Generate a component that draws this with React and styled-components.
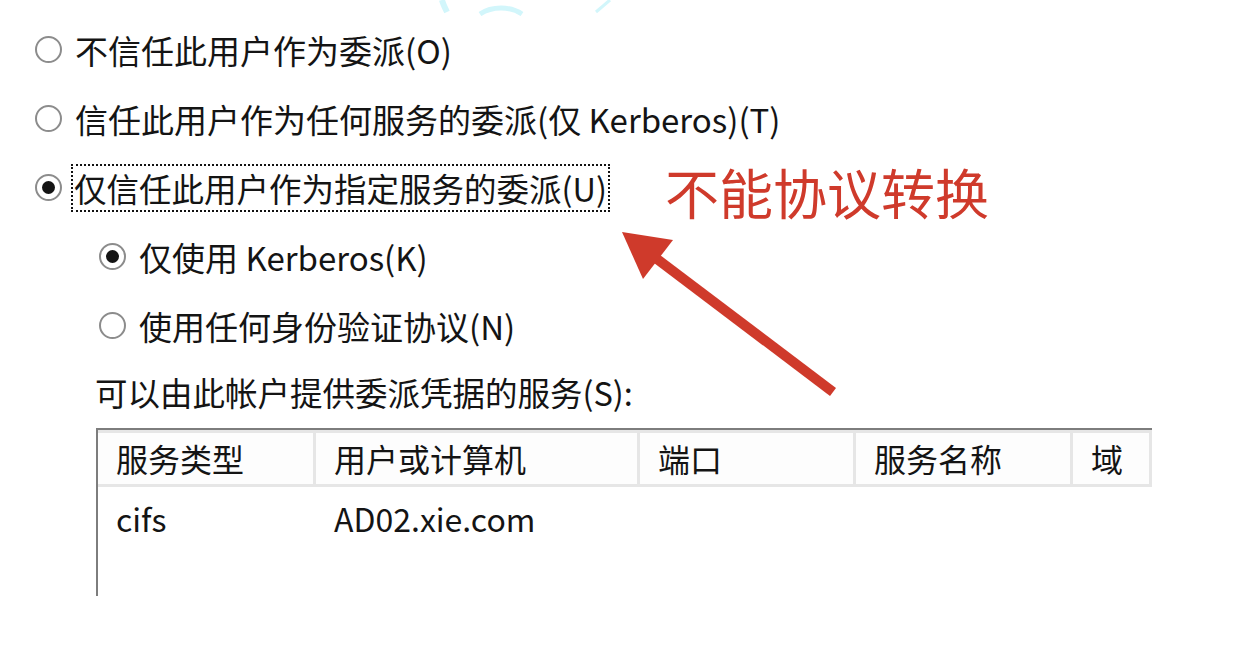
import React from 'react';
import styled, { createGlobalStyle } from 'styled-components';

const GlobalStyle = createGlobalStyle`
  html, body {
    margin: 0;
    padding: 0;
    background: #ffffff;
    overflow: hidden;
  }
  body {
    font-family: "Noto Sans CJK SC", "Noto Sans", sans-serif;
    color: #141414;
  }
`;

const Page = styled.div`
  position: relative;
  width: 1241px;
  height: 653px;
  padding: 15px 0 0 35px;
  box-sizing: border-box;
`;

const OptionRow = styled.div`
  display: flex;
  align-items: center;
  height: 69px;
  padding-left: ${p => p.$indent || 0}px;
  gap: 9px;
`;

const Radio = styled.span`
  width: 27px;
  height: 27px;
  box-sizing: border-box;
  border-radius: 50%;
  border: 2px solid #8c8c8c;
  display: inline-flex;
  align-items: center;
  justify-content: center;
  flex-shrink: 0;

  &::after {
    content: '';
    display: ${p => (p.$checked ? 'block' : 'none')};
    width: 13px;
    height: 13px;
    border-radius: 50%;
    background: #141414;
  }
`;

const Label = styled.span`
  font-size: ${p => (p.$focused ? 32.5 : 33)}px;
  line-height: 40px;
  padding: 2px ${p => (p.$focused ? 1 : 2)}px;
  border: 2px dotted ${p => (p.$focused ? '#111' : 'transparent')};
  white-space: nowrap;
`;

const Caption = styled.div`
  font-size: 32.5px;
  line-height: 40px;
  height: 64px;
  display: flex;
  align-items: center;
  padding-left: 60px;
  margin-bottom: 4px;
`;

const Table = styled.div`
  margin-left: 61px;
  width: 1056px;
  height: 168px;
  border-top: 2px solid #7d7d7d;
  border-left: 2px solid #7d7d7d;
  box-sizing: border-box;
  overflow: hidden;
`;

const Grid = styled.div`
  display: grid;
  grid-template-columns: 218px 324px 216px 217px 1fr;
`;

const HeadCell = styled.div`
  height: 57px;
  box-sizing: border-box;
  border-top: 3px solid #e6e6e6;
  border-bottom: 3px solid #e6e6e6;
  border-right: 3px solid #e6e6e6;
  background: #fdfdfd;
  font-size: 32px;
  line-height: 51px;
  padding-left: 18px;
  white-space: nowrap;
`;

const Cell = styled.div`
  height: 62px;
  font-size: 32px;
  line-height: 62px;
  padding-left: 18px;
  white-space: nowrap;
`;

const Note = styled.div`
  position: absolute;
  left: 665px;
  top: 158px;
  font-size: 54px;
  line-height: 68px;
  color: #cf3a2b;
  white-space: nowrap;
`;

const Overlay = styled.svg`
  position: absolute;
  pointer-events: none;
`;

const columns = ['服务类型', '用户或计算机', '端口', '服务名称', '域'];
const rows = [['cifs', 'AD02.xie.com', '', '', '']];

export default function App() {
  return (
    <>
      <GlobalStyle />
      <Page>
        <Overlay width="200" height="16" style={{ left: 430, top: 0 }} viewBox="0 0 200 16">
          <path d="M12 0 C13 4 15 8 17 12" stroke="#d2f6fb" strokeWidth="6" fill="none" />
          <path d="M50 14 C62 6 80 6 92 14" stroke="#d2f6fb" strokeWidth="5" fill="none" />
          <path d="M166 12 L180 0" stroke="#d2f6fb" strokeWidth="3" fill="none" />
        </Overlay>

        <OptionRow>
          <Radio />
          <Label>不信任此用户作为委派(O)</Label>
        </OptionRow>
        <OptionRow>
          <Radio />
          <Label>信任此用户作为任何服务的委派(仅 Kerberos)(T)</Label>
        </OptionRow>
        <OptionRow>
          <Radio $checked />
          <Label $focused>仅信任此用户作为指定服务的委派(U)</Label>
        </OptionRow>
        <OptionRow $indent={64}>
          <Radio $checked />
          <Label>仅使用 Kerberos(K)</Label>
        </OptionRow>
        <OptionRow $indent={64}>
          <Radio />
          <Label>使用任何身份验证协议(N)</Label>
        </OptionRow>

        <Caption>可以由此帐户提供委派凭据的服务(S):</Caption>

        <Table>
          <Grid>
            {columns.map(c => (
              <HeadCell key={c}>{c}</HeadCell>
            ))}
            {rows.map((r, i) =>
              r.map((v, j) => <Cell key={i + '-' + j}>{v}</Cell>)
            )}
          </Grid>
        </Table>

        <Note>不能协议转换</Note>

        <Overlay width="240" height="190" style={{ left: 610, top: 220 }} viewBox="0 0 240 190">
          <line x1="47" y1="39" x2="223" y2="172" stroke="#cf3a2b" strokeWidth="10" />
          <polygon points="12,12 63,20 33,59" fill="#cf3a2b" />
        </Overlay>
      </Page>
    </>
  );
}
